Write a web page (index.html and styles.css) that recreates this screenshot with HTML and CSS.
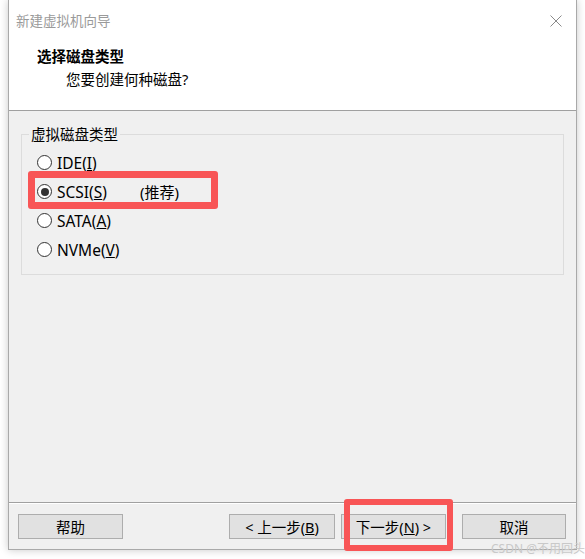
FILE: index.html
```html
<!DOCTYPE html>
<html lang="zh-CN">
<head>
<meta charset="utf-8">
<title>新建虚拟机向导</title>
<link rel="stylesheet" href="styles.css">
</head>
<body>
<div class="window">
  <div class="header">
    <div class="titlebar">
      <span class="title">新建虚拟机向导</span>
      <svg class="close" width="12" height="12" viewBox="0 0 12 12"><path d="M0.5 0.5 L11.5 11.5 M11.5 0.5 L0.5 11.5" stroke="#8a8a8a" stroke-width="1" fill="none"/></svg>
    </div>
    <div class="heading">选择磁盘类型</div>
    <div class="subheading">您要创建何种磁盘?</div>
  </div>
  <div class="main">
    <div class="group">
      <div class="legend">虚拟磁盘类型</div>
      <div class="radios">
        <div class="radio"><span class="dot"></span><span>IDE(<u>I</u>)</span></div>
        <div class="radio"><span class="dot checked"></span><span>SCSI(<u>S</u>)</span><span class="rec">(推荐)</span></div>
        <div class="radio"><span class="dot"></span><span>SATA(<u>A</u>)</span></div>
        <div class="radio"><span class="dot"></span><span>NVMe(<u>V</u>)</span></div>
      </div>
    </div>
  </div>
  <div class="footer">
    <button class="btn">帮助</button>
    <button class="btn back">&lt; 上一步(<u>B</u>)</button>
    <button class="btn next">下一步(<u>N</u>) &gt;</button>
    <button class="btn cancel">取消</button>
  </div>
</div>
<div class="mark mark-scsi"></div>
<div class="mark mark-next"></div>
<div class="watermark">CSDN @不用回头</div>
</body>
</html>
```

FILE: styles.css
```css
html, body {
  margin: 0;
  padding: 0;
  background: #ffffff;
}
body {
  width: 585px;
  height: 559px;
  position: relative;
  overflow: hidden;
  font-family: "Noto Sans", "Noto Sans CJK SC", sans-serif;
  font-size: 14.5px;
  color: #000;
}
.window {
  margin-left: 8px;
  width: 569px;
  height: 550px;
  box-sizing: border-box;
  border: 1px solid #a9a9a9;
  border-top: none;
  background: #f0f0f0;
  display: flex;
  flex-direction: column;
  box-shadow: 0 0 8px rgba(0, 0, 0, 0.22);
}
.header {
  height: 110px;
  background: #ffffff;
  border-bottom: 1px solid #a0a0a0;
  flex: none;
}
.titlebar {
  height: 42px;
  display: flex;
  align-items: center;
  justify-content: space-between;
  padding-left: 7px;
  padding-right: 14px;
}
.title {
  color: #9a9a9a;
  font-size: 13.5px;
  line-height: 20px;
}
.close {
  display: block;
}
.heading {
  font-weight: bold;
  font-size: 14.5px;
  line-height: 20px;
  padding-left: 28px;
  margin-top: 4px;
}
.subheading {
  font-size: 14.5px;
  line-height: 20px;
  padding-left: 57px;
  margin-top: 3px;
}
.main {
  flex: 1;
  padding: 23px 12px 0 12px;
}
.group {
  height: 141px;
  box-sizing: border-box;
  border: 1px solid #dcdcdc;
}
.legend {
  width: fit-content;
  margin: -11px 0 0 7px;
  padding: 0 2px;
  background: #f0f0f0;
  line-height: 20px;
  font-size: 14.5px;
}
.radios {
  padding: 4px 0 0 15px;
}
.radio {
  height: 29px;
  display: flex;
  align-items: center;
  font-size: 15.5px;
}
.dot {
  width: 15px;
  height: 15px;
  box-sizing: border-box;
  border: 1px solid #333;
  border-radius: 50%;
  background: #fff;
  margin-right: 5px;
  display: flex;
  align-items: center;
  justify-content: center;
}
.dot.checked::after {
  content: "";
  width: 8px;
  height: 8px;
  border-radius: 50%;
  background: #333;
}
.rec {
  margin-left: 33px;
  font-size: 15px;
}
.footer {
  flex: none;
  border-top: 1px solid #a0a0a0;
  box-shadow: inset 0 1px 0 #ffffff;
  padding: 11px 10px 10px 9px;
  display: flex;
  align-items: center;
}
.btn {
  width: 105px;
  height: 25px;
  box-sizing: border-box;
  border: 1px solid #adadad;
  background: #e1e1e1;
  font-family: "Noto Sans", "Noto Sans CJK SC", sans-serif;
  font-size: 14.5px;
  color: #000;
  padding: 0;
  line-height: 22px;
}
.back {
  margin-left: auto;
  width: 106px;
}
.next {
  margin-left: 6px;
}
.cancel {
  margin-left: 16px;
  width: 104px;
}
.mark {
  position: absolute;
  box-sizing: border-box;
  border: 7px solid #f85556;
  border-radius: 3px;
}
.mark-scsi {
  left: 28px;
  top: 171px;
  width: 190px;
  height: 38px;
}
.mark-next {
  left: 344px;
  top: 499px;
  width: 109px;
  height: 52px;
  border-width: 6px;
}
.watermark {
  position: absolute;
  right: 0;
  bottom: 3px;
  font-size: 12px;
  color: #c9c9c9;
  font-family: "Noto Sans", "Noto Sans CJK SC", sans-serif;
  line-height: 14px;
}
```
